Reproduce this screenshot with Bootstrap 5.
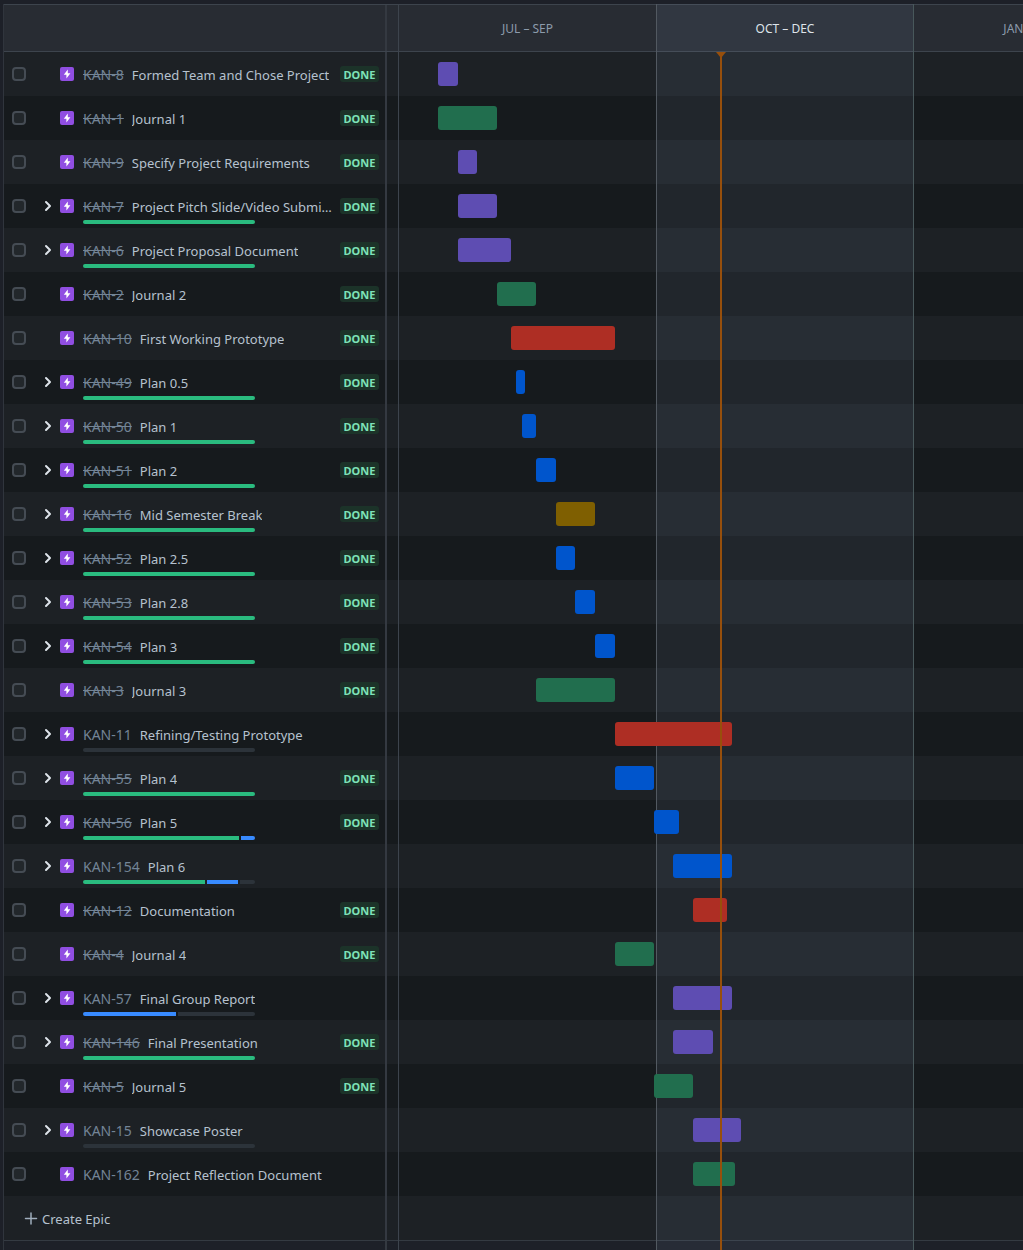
<!DOCTYPE html>
<html lang="en" data-bs-theme="dark">
<head>
<meta charset="utf-8">
<meta name="viewport" content="width=device-width, initial-scale=1">
<title>Timeline</title>
<link rel="stylesheet" href="https://cdn.jsdelivr.net/npm/bootstrap@5.3.0/dist/css/bootstrap.min.css">
<style>
:root { --line: #3d444d; --light: #1d2125; --dark: #161a1d; --head: #282c33; }
body { background: #1d2028; color: #b6c2cf; font-family: "Noto Sans", "Open Sans", sans-serif; font-size: 13px; line-height: 20px; overflow-x: hidden; }
.board { margin: 4px 0 0 3px; min-height: calc(100vh - 4px); border-left: 1px solid #30353d; }
.epic-pane { width: 394px; flex: none; }
.epic-main { width: 383px; border-right: 2px solid #343941; }
.chart-pane { min-width: 0; overflow: hidden; }
.head-cell { height: 48px; background: var(--head); border-top: 1px solid var(--line); border-bottom: 1px solid var(--line); }
.line-item { height: 44px; background: var(--light); }
.line-item:nth-child(even) { background: var(--dark); }
.foot-line { border-top: 1px solid #343a42; }
.pick { width: 14px; height: 14px; margin: 0 0 0 8px; border: 2px solid #454c54; border-radius: 4px; background: #22272b; appearance: none; flex: none; }
.pick:checked { background: #388bff; border-color: #388bff; }
.toggle-slot { width: 16px; margin-left: 14px; flex: none; }
.toggle-slot button, .create-btn { background: none; border: 0; padding: 0; color: inherit; }
.toggle-slot button { width: 16px; height: 16px; color: #dee4ea; }
.epic-icon { margin: 0 9px 0 4px; flex: none; }
.epic-text { padding-top: 13px; }
.epic-key, .epic-key:hover { color: #738496; font-size: 14px; text-decoration: none; }
.epic-key.is-done { text-decoration: line-through; }
.meter { width: 172px; height: 4px; margin-top: 3px; gap: 2px; border-radius: 2px; }
.meter-green { background: #2abb7f; }
.meter-blue { background: #388bff; }
.meter-rest { background: #2c333a; }
.status-slot { width: 39px; margin: 0 6px 0 4px; flex: none; }
.status { display: block; height: 16px; line-height: 17px; border-radius: 3px; background: #1c3329; color: #7ee2b8; font-size: 11px; font-weight: 700; text-align: center; }
.create-btn { margin-left: 20px; padding-top: 2px; }
.quarters { display: grid; grid-template-columns: 258px 257px 257px; }
.quarter { border-left: 1px solid var(--line); }
.quarter.now { background: rgba(161,189,230,.08); border-color: #525961; }
.quarter.now + .quarter { border-color: #48585b; }
.quarter-label { height: 50px; font-size: 12px; color: #8c9bab; }
.now .quarter-label { color: #dee4ea; }
.lane-bar { position: relative; height: 24px; border-radius: 3px; }
.tone-purple { background: #5e4db2; } .tone-green { background: #216e4e; }
.tone-red { background: #ae2e24; } .tone-blue { background: #0055cc; } .tone-yellow { background: #7f5f01; }
.today { top: 48px; bottom: 0; left: 322px; width: 2px; background: #974f0c; z-index: 2; }
.today::before { content: ""; position: absolute; left: -4px; top: 0; border: 5px solid transparent; border-top: 6px solid #974f0c; border-bottom: 0; }
</style>
<script src="https://cdn.jsdelivr.net/npm/bootstrap@5.3.0/dist/js/bootstrap.bundle.min.js"></script>
</head>
<body>
<main class="board d-flex">
  <section class="epic-pane d-flex flex-column" aria-label="Epics">
    <div class="head-cell"><div class="epic-main h-100"></div></div>
    <div id="epics"></div>
    <div class="foot-line flex-fill d-flex"><div class="epic-main"></div></div>
  </section>
  <section class="chart-pane position-relative flex-fill" aria-label="Chart">
    <div class="head-cell"></div>
    <div id="lanes"></div>
    <div class="foot-line"></div>
    <div class="quarters position-absolute top-0 bottom-0 start-0">
      <div class="quarter"><div class="quarter-label d-flex align-items-center justify-content-center">JUL – SEP</div></div>
      <div class="quarter now"><div class="quarter-label d-flex align-items-center justify-content-center">OCT – DEC</div></div>
      <div class="quarter"><div class="quarter-label d-flex align-items-center justify-content-center">JAN – MAR ’25</div></div>
    </div>
    <div class="today position-absolute"></div>
  </section>
</main>
<script>
// key, title, done, tone, start, length, progress [green, blue, rest] or null
const epics = [
  [8, "Formed Team and Chose Project", 1, "purple", 40, 20, null],
  [1, "Journal 1", 1, "green", 40, 59, null],
  [9, "Specify Project Requirements", 1, "purple", 60, 19, null],
  [7, "Project Pitch Slide/Video Submi…", 1, "purple", 60, 39, [1, 0, 0]],
  [6, "Project Proposal Document", 1, "purple", 60, 53, [1, 0, 0]],
  [2, "Journal 2", 1, "green", 99, 39, null],
  [10, "First Working Prototype", 1, "red", 113, 104, null],
  [49, "Plan 0.5", 1, "blue", 118, 9, [1, 0, 0]],
  [50, "Plan 1", 1, "blue", 124, 14, [1, 0, 0]],
  [51, "Plan 2", 1, "blue", 138, 20, [1, 0, 0]],
  [16, "Mid Semester Break", 1, "yellow", 158, 39, [1, 0, 0]],
  [52, "Plan 2.5", 1, "blue", 158, 19, [1, 0, 0]],
  [53, "Plan 2.8", 1, "blue", 177, 20, [1, 0, 0]],
  [54, "Plan 3", 1, "blue", 197, 20, [1, 0, 0]],
  [3, "Journal 3", 1, "green", 138, 79, null],
  [11, "Refining/Testing Prototype", 0, "red", 217, 117, [0, 0, 1]],
  [55, "Plan 4", 1, "blue", 217, 39, [1, 0, 0]],
  [56, "Plan 5", 1, "blue", 256, 25, [156, 14, 0]],
  [154, "Plan 6", 0, "blue", 275, 59, [122, 31, 15]],
  [12, "Documentation", 1, "red", 295, 34, null],
  [4, "Journal 4", 1, "green", 217, 39, null],
  [57, "Final Group Report", 0, "purple", 275, 59, [0, 93, 77]],
  [146, "Final Presentation", 1, "purple", 275, 40, [1, 0, 0]],
  [5, "Journal 5", 1, "green", 256, 39, null],
  [15, "Showcase Poster", 0, "purple", 295, 48, [0, 0, 1]],
  [162, "Project Reflection Document", 0, "green", 295, 42, null]
];
const chevron = '<svg class="d-block" width="16" height="16" viewBox="0 0 16 16" fill="none" stroke="currentColor" stroke-width="2" stroke-linecap="round" stroke-linejoin="round"><path d="M6 4l4 4-4 4"/></svg>';
const bolt = '<svg class="epic-icon" width="14" height="14" viewBox="0 0 14 14" aria-hidden="true"><rect width="14" height="14" rx="2" fill="#904ee2"/><path d="M7.8 2.6L3.8 7.7h2.6v3.7l4-5.1H7.8z" fill="#fff"/></svg>';
const meter = p => p ? '<div class="meter d-flex overflow-hidden">' + ["green", "blue", "rest"].map((n, i) => p[i] ? `<div class="meter-${n}" style="flex-grow:${p[i]}"></div>` : "").join("") + "</div>" : "";

document.getElementById("epics").innerHTML = epics.map(([id, title, done, , , , progress]) => `
  <div class="line-item"><div class="epic-main h-100 d-flex align-items-center">
    <input class="pick" type="checkbox" aria-label="Select KAN-${id}">
    <div class="toggle-slot">${progress ? `<button type="button" class="d-block" aria-label="Expand KAN-${id}">${chevron}</button>` : ""}</div>
    ${bolt}
    <div class="epic-text h-100 flex-fill overflow-hidden">
      <div class="d-flex gap-2"><a href="#" class="epic-key text-nowrap${done ? " is-done" : ""}">KAN-${id}</a><span class="text-truncate">${title}</span></div>
      ${meter(progress)}
    </div>
    <div class="status-slot">${done ? '<span class="status">DONE</span>' : ""}</div>
  </div></div>`).join("") + `
  <div class="line-item"><div class="epic-main h-100 d-flex align-items-center">
    <button type="button" class="create-btn d-flex align-items-center gap-1"><svg width="14" height="14" viewBox="0 0 14 14" stroke="#9fadbc" stroke-width="1.5" stroke-linecap="round"><path d="M7 1v11M1.5 6.5h11"/></svg>Create Epic</button>
  </div></div>`;

document.getElementById("lanes").innerHTML = epics.map(([, , , tone, start, length]) => `
  <div class="line-item d-flex align-items-center"><div class="lane-bar z-1 tone-${tone}" style="margin-left:${start}px;width:${length}px"></div></div>`).join("") + '<div class="line-item"></div>';
</script>
</body>
</html>
